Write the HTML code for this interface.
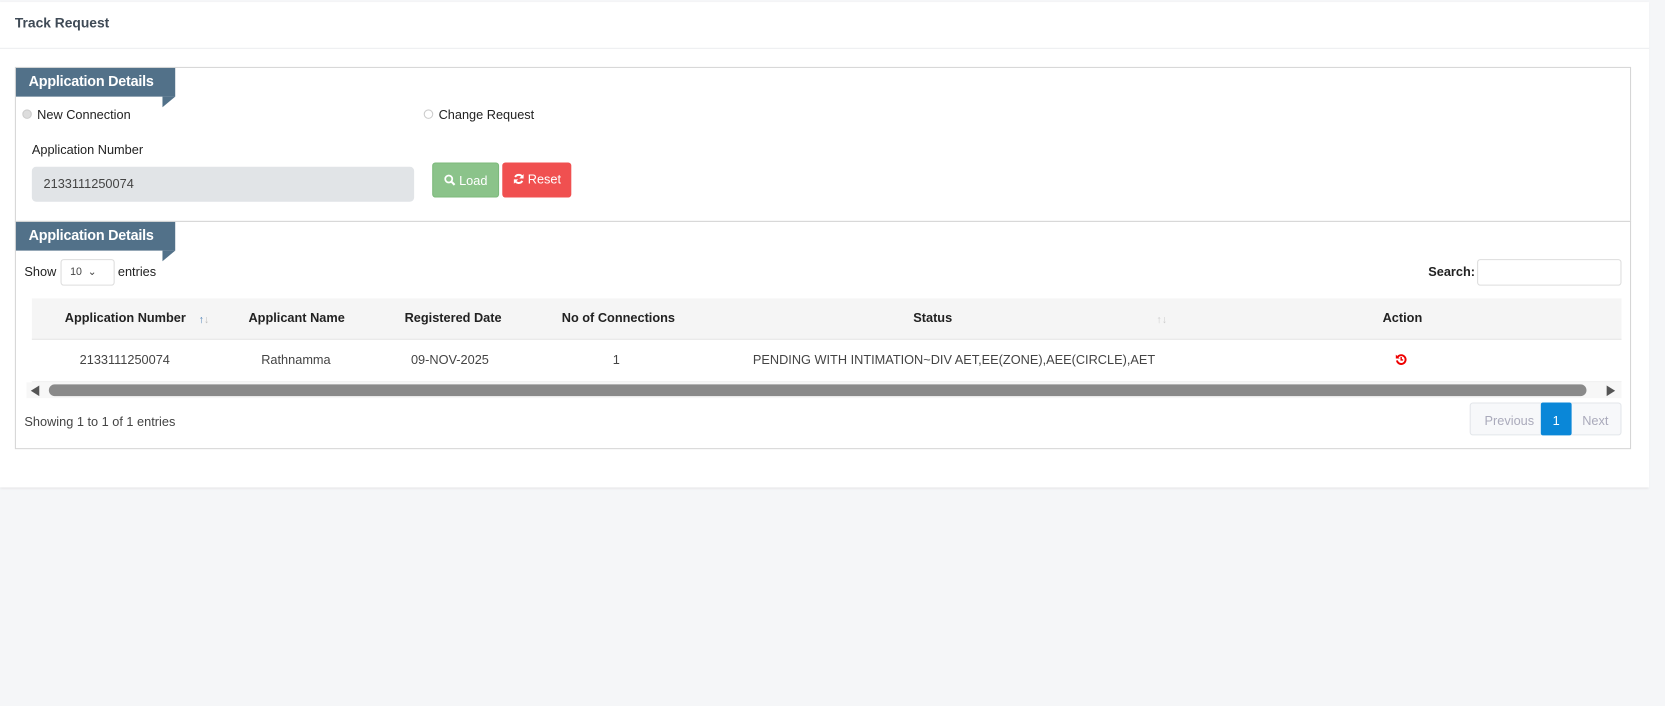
<!DOCTYPE html>
<html><head><meta charset="utf-8"><style>
*{box-sizing:border-box;margin:0;padding:0}
html,body{width:1665px;height:706px;overflow:hidden}
body{background:#f5f6f8;font-family:"Liberation Sans",sans-serif;font-size:12px;color:#333;position:relative}
#wrap{position:absolute;left:0;top:0;width:1568px;height:665px;transform:scale(1.0619);transform-origin:0 0}
.card{position:absolute;left:0;top:2px;width:1553px;height:457px;background:#fff;box-shadow:0 1px 2px rgba(0,0,0,.08)}
.hdr{height:44px;border-bottom:1px solid #eceef0;padding:13px 14px;font-size:13px;font-weight:bold;color:#3f4a56}
.box{position:absolute;left:14px;width:1522px;border:1px solid #d6d6d6;background:#fff}
.tag{position:absolute;left:0;top:0;height:27px;width:150px;background:#527189;color:#fff;font-weight:bold;font-size:13.5px;padding:5px 12px;white-space:nowrap;letter-spacing:-0.2px}
.tag:after{content:"";position:absolute;left:138px;top:27px;border-top:10px solid #527189;border-right:12px solid transparent}
.abs{position:absolute;white-space:nowrap}
.radio{width:9px;height:9px;border-radius:50%;border:1px solid #ccc;background:#eee}
.btn{position:absolute;height:33px;border-radius:3px;color:#fff;font-size:12px;padding:9px 0;text-align:center;white-space:nowrap}
</style></head><body><div id="wrap">
<div class="card">
<div class="hdr" style="padding-top:12px">Track Request</div>
<div class="box" style="top:61px;height:146px">
 <div class="tag">Application Details</div>
 <div class="abs radio" style="left:6px;top:39px;background:#ddd"></div>
 <div class="abs" style="left:20px;top:37px;color:#222">New Connection</div>
 <div class="abs radio" style="left:384px;top:39px;background:#fff"></div>
 <div class="abs" style="left:398px;top:37px;color:#222">Change Request</div>
 <div class="abs" style="left:15px;top:70px;color:#222">Application Number</div>
 <div class="abs" style="left:15px;top:93px;width:360px;height:33px;background:#e1e4e7;border-radius:4px;padding:9px 11px;color:#444">2133111250074</div>
 <div class="btn" style="left:392px;top:89px;width:63px;background:#8bc38a;border:1px solid #7cb97b"><svg width="11" height="11" viewBox="0 0 12 12" style="vertical-align:-1px"><circle cx="5" cy="5" r="3.6" fill="none" stroke="#fff" stroke-width="1.8"/><path d="M7.6 7.6L11 11" stroke="#fff" stroke-width="2.2"/></svg> Load</div>
 <div class="btn" style="left:458px;top:89px;width:65px;background:#f05050"><svg width="11" height="11" viewBox="0 0 12 12" style="vertical-align:-1px"><path d="M10 4.5A4.3 4.3 0 0 0 2.3 4M2 7.5A4.3 4.3 0 0 0 9.7 8" fill="none" stroke="#fff" stroke-width="2"/><path d="M11 1v4.5H6.5zM1 11V6.5h4.5z" fill="#fff"/></svg> Reset</div>
</div>
<div class="box" style="top:206px;height:215px">
 <div class="tag">Application Details</div>
 <div class="abs" style="left:8px;top:40px;color:#222">Show</div>
 <div class="abs" style="left:42px;top:35px;width:51px;height:25px;border:1px solid #ddd;border-radius:3px;font-size:10px;padding:6px 8px;color:#444">10 &nbsp;&#8964;</div>
 <div class="abs" style="left:96px;top:40px;color:#222">entries</div>
 <div class="abs" style="left:1330px;top:40px;font-weight:bold;color:#222">Search:</div>
 <div class="abs" style="left:1376px;top:35px;width:136px;height:25px;border:1px solid #ddd;border-radius:3px"></div>
 <div class="abs" style="left:15px;top:72px;width:1497px;height:39px;background:#f5f5f5;border-bottom:1px solid #e6e6e6"></div>
 <div class="abs" style="left:15px;top:111px;width:1497px;height:40px;border-bottom:1px solid #eee"></div>
 <div class="abs" style="left:46px;top:83px;font-weight:bold;color:#222">Application Number</div>
 <div class="abs" style="left:172px;top:87px;font-size:10px;color:#4a7fb5">&#8593;<span style="color:#bbb">&#8595;</span></div>
 <div class="abs" style="left:219px;top:83px;font-weight:bold;color:#222">Applicant Name</div>
 <div class="abs" style="left:366px;top:83px;font-weight:bold;color:#222">Registered Date</div>
 <div class="abs" style="left:514px;top:83px;font-weight:bold;color:#222">No of Connections</div>
 <div class="abs" style="left:845px;top:83px;font-weight:bold;color:#222">Status</div>
 <div class="abs" style="left:1074px;top:87px;font-size:10px;color:#ccc">&#8593;&#8595;</div>
 <div class="abs" style="left:1287px;top:83px;font-weight:bold;color:#222">Action</div>
 <div class="abs" style="left:60px;top:123px;color:#444">2133111250074</div>
 <div class="abs" style="left:231px;top:123px;color:#444">Rathnamma</div>
 <div class="abs" style="left:372px;top:123px;color:#444">09-NOV-2025</div>
 <div class="abs" style="left:562px;top:123px;color:#444">1</div>
 <div class="abs" style="left:694px;top:123px;color:#444">PENDING WITH INTIMATION~DIV AET,EE(ZONE),AEE(CIRCLE),AET</div>
 <svg class="abs" style="left:1299px;top:124px" width="11" height="11" viewBox="0 0 12 12"><path d="M2.6 3.2A4.5 4.5 0 1 1 1.6 7" fill="none" stroke="#e00" stroke-width="2"/><path d="M0.5 1v4h4z" fill="#e00"/><path d="M6 3.5V6.5h2" fill="none" stroke="#e00" stroke-width="1.5"/></svg>
 <div class="abs" style="left:10px;top:151px;width:1502px;height:15px;background:#f7f7f7"></div>
 <div class="abs" style="left:14px;top:154px;border-right:8px solid #555;border-top:5px solid transparent;border-bottom:5px solid transparent"></div>
 <div class="abs" style="left:31px;top:153px;width:1448px;height:11px;background:#8a8a8a;border-radius:6px"></div>
 <div class="abs" style="left:1498px;top:154px;border-left:8px solid #555;border-top:5px solid transparent;border-bottom:5px solid transparent"></div>
 <div class="abs" style="left:8px;top:181px;color:#444">Showing 1 to 1 of 1 entries</div>
 <div class="abs" style="left:1369px;top:170px;width:143px;height:31px;border:1px solid #e3e6ea;border-radius:3px;background:#f7f8fa"></div>
 <div class="abs" style="left:1383px;top:180px;color:#aab">Previous</div>
 <div class="abs" style="left:1436px;top:170px;width:29px;height:31px;background:#0a87d8;color:#fff;text-align:center;padding-top:10px;border-radius:2px">1</div>
 <div class="abs" style="left:1475px;top:180px;color:#aab">Next</div>
</div>
</div>
</div></body></html>
